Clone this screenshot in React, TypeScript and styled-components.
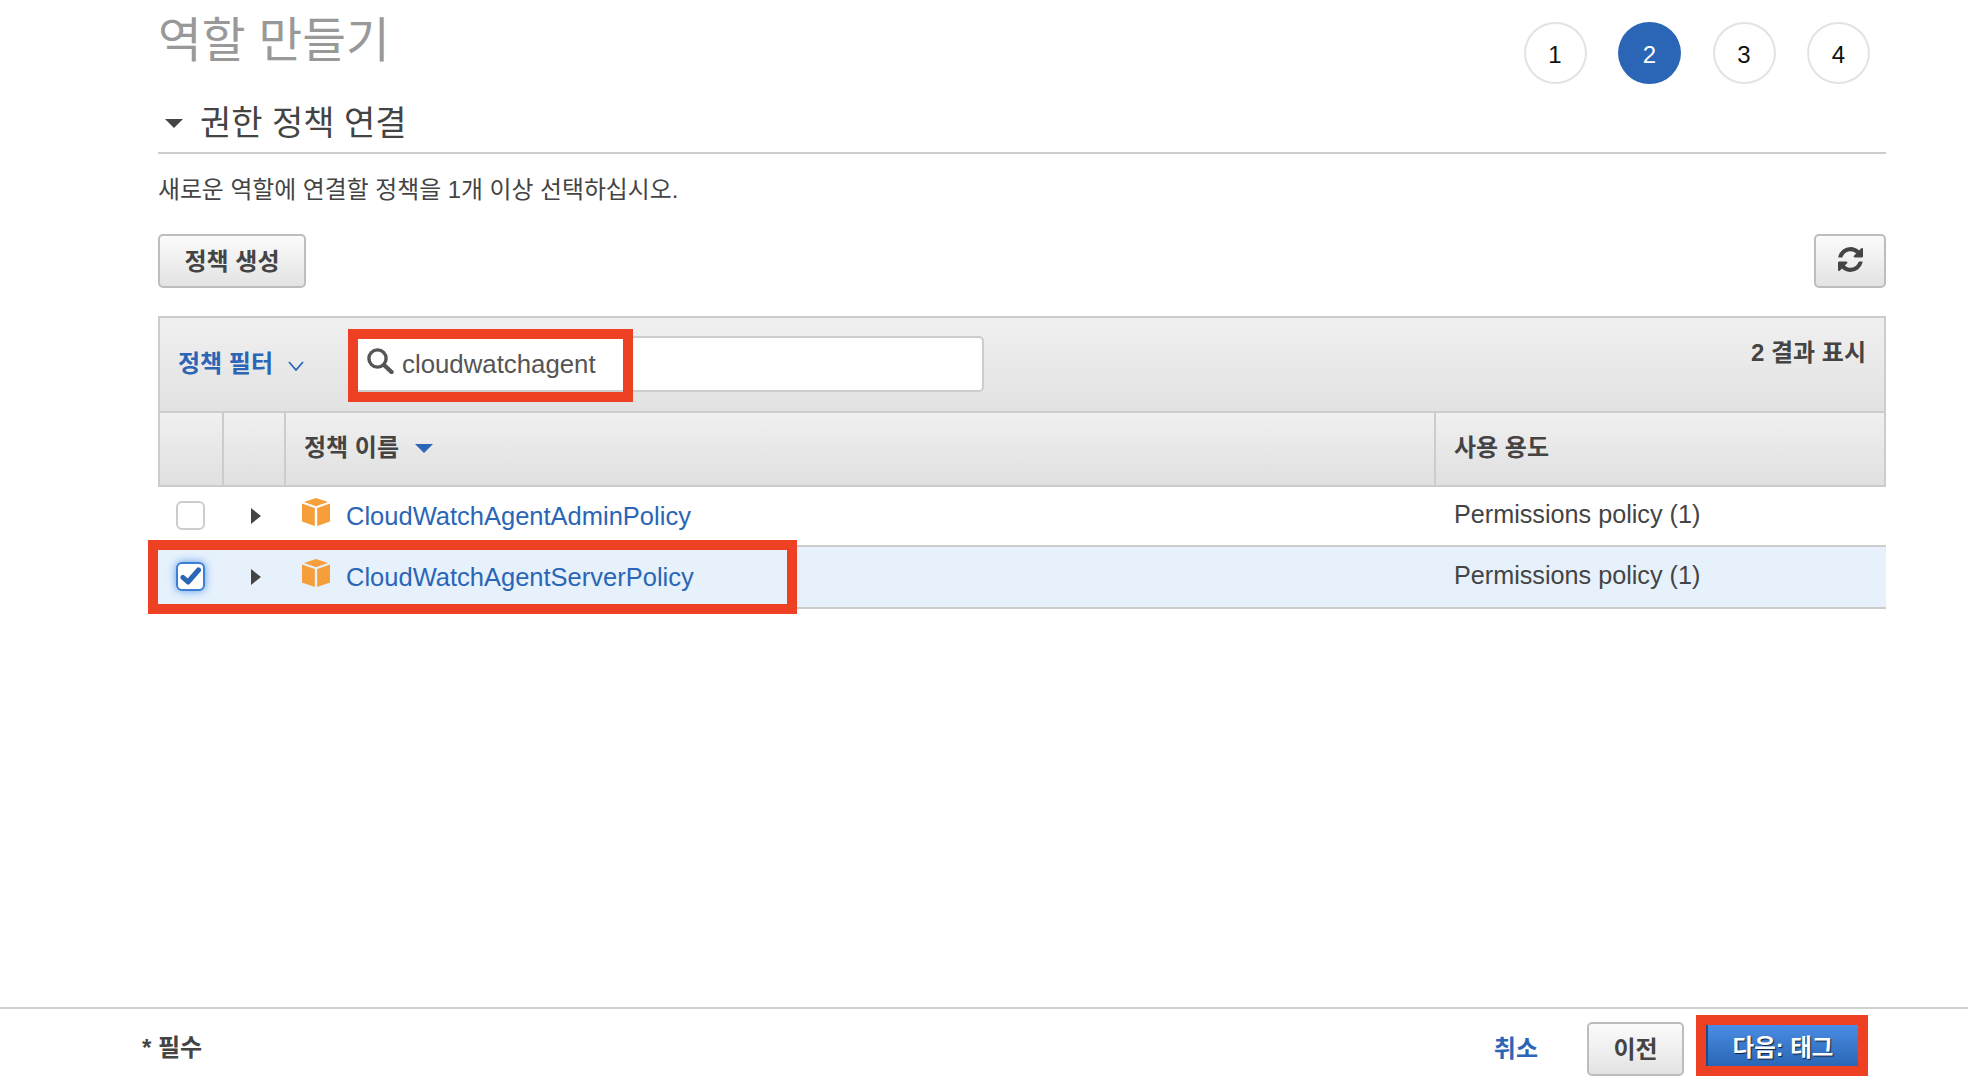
import React from "react";
import styled, { createGlobalStyle } from "styled-components";

const GlobalStyle = createGlobalStyle`
	html, body {
		margin: 0;
		padding: 0;
		background: #fff;
	}
	body {
		font-family: "Liberation Sans", "Noto Sans CJK KR", sans-serif;
		color: #444;
	}
	* {
		box-sizing: border-box;
	}
`;

const CubeIcon = () => (
	<svg width="28" height="28" viewBox="0 0 28 28">
		<path d="M14 0 L26 4 L14 8.2 L2 4 Z" fill="#f59e3a" />
		<path d="M0 5.6 L12.8 10 V28 L0 23.6 Z" fill="#f59e3a" />
		<path d="M28 5.6 L15.2 10 V28 L28 23.6 Z" fill="#f59e3a" />
	</svg>
);

const CheckMark = () => (
	<svg width="22" height="20" viewBox="0 0 22 20">
		<path d="M3 11.5 L8 16 L18.5 4" fill="none" stroke="#2a66b5" strokeWidth="5" strokeLinecap="round" strokeLinejoin="round" />
	</svg>
);

const RefreshIcon = () => (
	<svg width="25" height="25" viewBox="128 128 1536 1536">
		<path
			fill="#444"
			d="M1639 1056q0 5-1 7-64 268-268 434.5t-476 166.5q-146 0-282.5-55t-243.5-157l-129 129q-19 19-45 19t-45-19-19-45v-448q0-26 19-45t45-19h448q26 0 45 19t19 45-19 45l-137 137q71 66 161 102t187 36q134 0 250-65t186-179q11-17 53-117 8-23 30-23h192q13 0 22.5 9.5t9.5 22.5zm25-800v448q0 26-19 45t-45 19h-448q-26 0-45-19t-19-45 19-45l138-138q-148-137-349-137-134 0-250 65t-186 179q-11 17-53 117-8 23-30 23h-199q-13 0-22.5-9.5t-9.5-22.5v-7q65-268 270-434.5t480-166.5q146 0 284 55.5t245 156.5l130-129q19-19 45-19t45 19 19 45z"
		/>
	</svg>
);

const SearchIcon = () => (
	<svg width="27" height="26" viewBox="0 0 27 26">
		<circle cx="10.5" cy="10.5" r="8.6" fill="none" stroke="#555" strokeWidth="3.4" />
		<path d="M17 17 L24.5 24" stroke="#555" strokeWidth="4.4" strokeLinecap="round" />
	</svg>
);

const policies = [
	{ name: "CloudWatchAgentAdminPolicy", checked: false, height: 60 },
	{ name: "CloudWatchAgentServerPolicy", checked: true, height: 62 },
];

const App = () => {
	return (
		<Page>
			<GlobalStyle />
			<Main>
				<TitleRow>
					<Title>역할 만들기</Title>
					<Steps>
						{[1, 2, 3, 4].map((n) => (
							<Step key={n} $active={n === 2}>{n}</Step>
						))}
					</Steps>
				</TitleRow>
				<SectionHead>
					<Caret />
					<SectionTitle>권한 정책 연결</SectionTitle>
				</SectionHead>
				<Intro>새로운 역할에 연결할 정책을 1개 이상 선택하십시오.</Intro>
				<Toolbar>
					<GrayButton $width={148}>정책 생성</GrayButton>
					<GrayButton $width={72}><RefreshIcon /></GrayButton>
				</Toolbar>
				<Table>
					<FilterBar>
						<FilterLabel>
							정책 필터
							<FilterChevron width="16" height="10" viewBox="0 0 16 10">
								<path d="M1 1 L8 9 L15 1" fill="none" stroke="#2a66b5" strokeWidth="1.8" />
							</FilterChevron>
						</FilterLabel>
						<SearchBox>
							<SearchIcon />
							<SearchText>cloudwatchagent</SearchText>
							<SearchHighlight />
						</SearchBox>
						<ResultCount>2 결과 표시</ResultCount>
					</FilterBar>
					<HeadRow>
						<HeadCell />
						<HeadCell />
						<HeadCell>
							정책 이름
							<SortCaret />
						</HeadCell>
						<HeadCell>사용 용도</HeadCell>
					</HeadRow>
					{policies.map((policy) => (
						<Row key={policy.name} $selected={policy.checked} $height={policy.height}>
							<CheckCell>
								<CheckBox $checked={policy.checked}>
									{policy.checked && <CheckMark />}
								</CheckBox>
							</CheckCell>
							<ExpandCell>
								<ExpandArrow />
							</ExpandCell>
							<NameCell>
								<CubeSlot><CubeIcon /></CubeSlot>
								<PolicyLink>{policy.name}</PolicyLink>
							</NameCell>
							<UsageCell>Permissions policy (1)</UsageCell>
							{policy.checked && <RowHighlight />}
						</Row>
					))}
				</Table>
			</Main>
			<Footer>
				<Required>* 필수</Required>
				<FooterActions>
					<CancelLink>취소</CancelLink>
					<PrevButton>이전</PrevButton>
					<NextButton>다음: 태그</NextButton>
				</FooterActions>
			</Footer>
		</Page>
	);
};

export default App;

const Page = styled.div`
	height: 1084px;
	width: 100%;
	display: flex;
	flex-direction: column;
	overflow: hidden;
	background: #fff;
`;

const Main = styled.div`
	flex: 1;
	padding: 0 82px 0 158px;
`;

const TitleRow = styled.div`
	height: 84px;
	display: flex;
	justify-content: space-between;
	align-items: flex-start;
`;

const Title = styled.h1`
	margin: 11px 0 0;
	font-size: 47.5px;
	line-height: 60px;
	font-weight: 400;
	color: #999;
`;

const Steps = styled.div`
	display: flex;
	gap: 31.5px;
	margin-top: 22px;
	padding-right: 16px;
`;

const Step = styled.div<{ $active: boolean }>`
	width: 63px;
	height: 62px;
	border-radius: 50%;
	display: flex;
	align-items: center;
	justify-content: center;
	font-size: 24px;
	padding-top: 3px;
	color: ${(p) => (p.$active ? "#fff" : "#111")};
	background: ${(p) => (p.$active ? "#2b66b6" : "#fff")};
	border: 2px solid ${(p) => (p.$active ? "#2b66b6" : "#e3e3e3")};
`;

const SectionHead = styled.div`
	height: 70px;
	display: flex;
	align-items: center;
	border-bottom: 2px solid #ccc;
	padding: 10px 0 0 7px;
`;

const Caret = styled.span`
	width: 0;
	height: 0;
	margin: 0 17px 0 0;
	border-left: 9px solid transparent;
	border-right: 9px solid transparent;
	border-top: 9px solid #444;
`;

const SectionTitle = styled.h2`
	margin: 0;
	font-size: 34px;
	line-height: 40px;
	font-weight: 400;
	color: #444;
`;

const Intro = styled.p`
	margin: 0;
	padding-top: 19px;
	font-size: 23.85px;
	line-height: 34px;
	color: #444;
`;

const Toolbar = styled.div`
	margin-top: 27px;
	display: flex;
	justify-content: space-between;
`;

const GrayButton = styled.div<{ $width: number }>`
	width: ${(p) => p.$width}px;
	height: 54px;
	display: flex;
	align-items: center;
	justify-content: center;
	padding-bottom: 3px;
	border: 2px solid #bdbdbd;
	border-radius: 5px;
	background: linear-gradient(#fbfbfb, #e3e3e3);
	font-size: 24px;
	font-weight: 700;
	color: #444;
`;

const Table = styled.div`
	margin-top: 28px;
`;

const FilterBar = styled.div`
	height: 95px;
	display: flex;
	border: 2px solid #ccc;
	border-bottom: 0;
	background: linear-gradient(#f0f0f0, #e2e2e2);
	padding-left: 18px;
`;

const FilterLabel = styled.div`
	width: 177px;
	height: 92px;
	display: flex;
	align-items: center;
	gap: 15px;
	padding-bottom: 6px;
	font-size: 24px;
	font-weight: 700;
	color: #2a66b5;
`;

const FilterChevron = styled.svg`
	margin-top: 10px;
`;

const SearchBox = styled.div`
	position: relative;
	width: 629px;
	height: 56px;
	margin-top: 18px;
	display: flex;
	align-items: center;
	gap: 8px;
	padding: 0 0 6px 10px;
	background: #fff;
	border: 2px solid #ccc;
	border-radius: 5px;
`;

const SearchText = styled.span`
	font-size: 25.8px;
	color: #555;
	margin-top: 6px;
`;

const SearchHighlight = styled.div`
	position: absolute;
	left: -9px;
	top: -9px;
	width: 285px;
	height: 73px;
	border: 10px solid #ee4023;
	pointer-events: none;
`;

const ResultCount = styled.div`
	margin-left: auto;
	padding: 18px 18px 0 0;
	font-size: 24px;
	font-weight: 700;
	color: #444;
	line-height: 34px;
`;

const columns = "62px 62px 1fr 450px";

const HeadRow = styled.div`
	display: grid;
	grid-template-columns: ${columns};
	height: 76px;
	border: 2px solid #ccc;
	background: linear-gradient(#f0f0f0, #e0e0e0);
`;

const HeadCell = styled.div`
	display: flex;
	align-items: center;
	padding: 0 0 7px 18px;
	font-size: 24px;
	font-weight: 700;
	color: #444;
	border-left: 2px solid #ccc;
	&:first-child {
		border-left: 0;
	}
`;

const SortCaret = styled.span`
	width: 0;
	height: 0;
	margin: 5px 0 0 16px;
	border-left: 9px solid transparent;
	border-right: 9px solid transparent;
	border-top: 9px solid #2a66b5;
`;

const Row = styled.div<{ $selected: boolean; $height: number }>`
	position: relative;
	display: grid;
	grid-template-columns: ${columns};
	height: ${(p) => p.$height}px;
	align-items: center;
	border-bottom: 2px solid #ccc;
	background: ${(p) => (p.$selected ? "#e6f1fc" : "#fff")};
`;

const CheckCell = styled.div`
	display: flex;
	padding: 0 0 2px 18px;
`;

const CheckBox = styled.div<{ $checked: boolean }>`
	width: 29px;
	height: 29px;
	display: flex;
	align-items: center;
	justify-content: center;
	background: #fff;
	border-radius: 6px;
	border: 2px solid ${(p) => (p.$checked ? "#3b7fd6" : "#ccc")};
	box-shadow: ${(p) => (p.$checked ? "0 0 8px #5a9ae8" : "none")};
`;

const ExpandCell = styled.div`
	display: flex;
	padding-left: 31px;
`;

const ExpandArrow = styled.span`
	width: 0;
	height: 0;
	border-top: 8.5px solid transparent;
	border-bottom: 8.5px solid transparent;
	border-left: 10px solid #444;
`;

const NameCell = styled.div`
	display: flex;
	align-items: center;
	padding-left: 20px;
`;

const CubeSlot = styled.span`
	display: flex;
	margin: -9px 16px 0 0;
`;

const PolicyLink = styled.a`
	font-size: 25.5px;
	color: #2a66b5;
	margin-top: 1px;
`;

const UsageCell = styled.div`
	padding: 0 0 3px 18px;
	font-size: 25.2px;
	color: #444;
`;

const RowHighlight = styled.div`
	position: absolute;
	left: -10px;
	top: -7px;
	width: 649px;
	height: 74px;
	border: 10px solid #ee4023;
	pointer-events: none;
`;

const Footer = styled.div`
	height: 77px;
	display: flex;
	justify-content: space-between;
	align-items: flex-end;
	border-top: 2px solid #d0d0d0;
	padding: 0 100px 8px 142px;
`;

const Required = styled.div`
	font-size: 24px;
	font-weight: 700;
	color: #444;
	line-height: 54px;
	padding-bottom: 1px;
`;

const FooterActions = styled.div`
	display: flex;
	align-items: flex-end;
`;

const CancelLink = styled.a`
	font-size: 24px;
	font-weight: 700;
	color: #2a66b5;
	line-height: 54px;
	margin-right: 49px;
`;

const PrevButton = styled.div`
	width: 97px;
	height: 54px;
	margin-right: 12px;
	display: flex;
	align-items: center;
	justify-content: center;
	padding-bottom: 4px;
	border: 2px solid #bdbdbd;
	border-radius: 5px;
	background: linear-gradient(#fbfbfb, #e3e3e3);
	font-size: 24px;
	font-weight: 700;
	color: #444;
`;

const NextButton = styled.div`
	width: 172px;
	height: 61px;
	display: flex;
	align-items: center;
	justify-content: center;
	padding-left: 2px;
	border: 10px solid #ee4023;
	background: linear-gradient(#4a8de4, #2a66b5) padding-box;
	box-shadow: inset 2px 0 0 #1f4a86;
	font-size: 23.5px;
	font-weight: 700;
	color: #fff;
	text-shadow: 1px 1px 1px #123;
`;
